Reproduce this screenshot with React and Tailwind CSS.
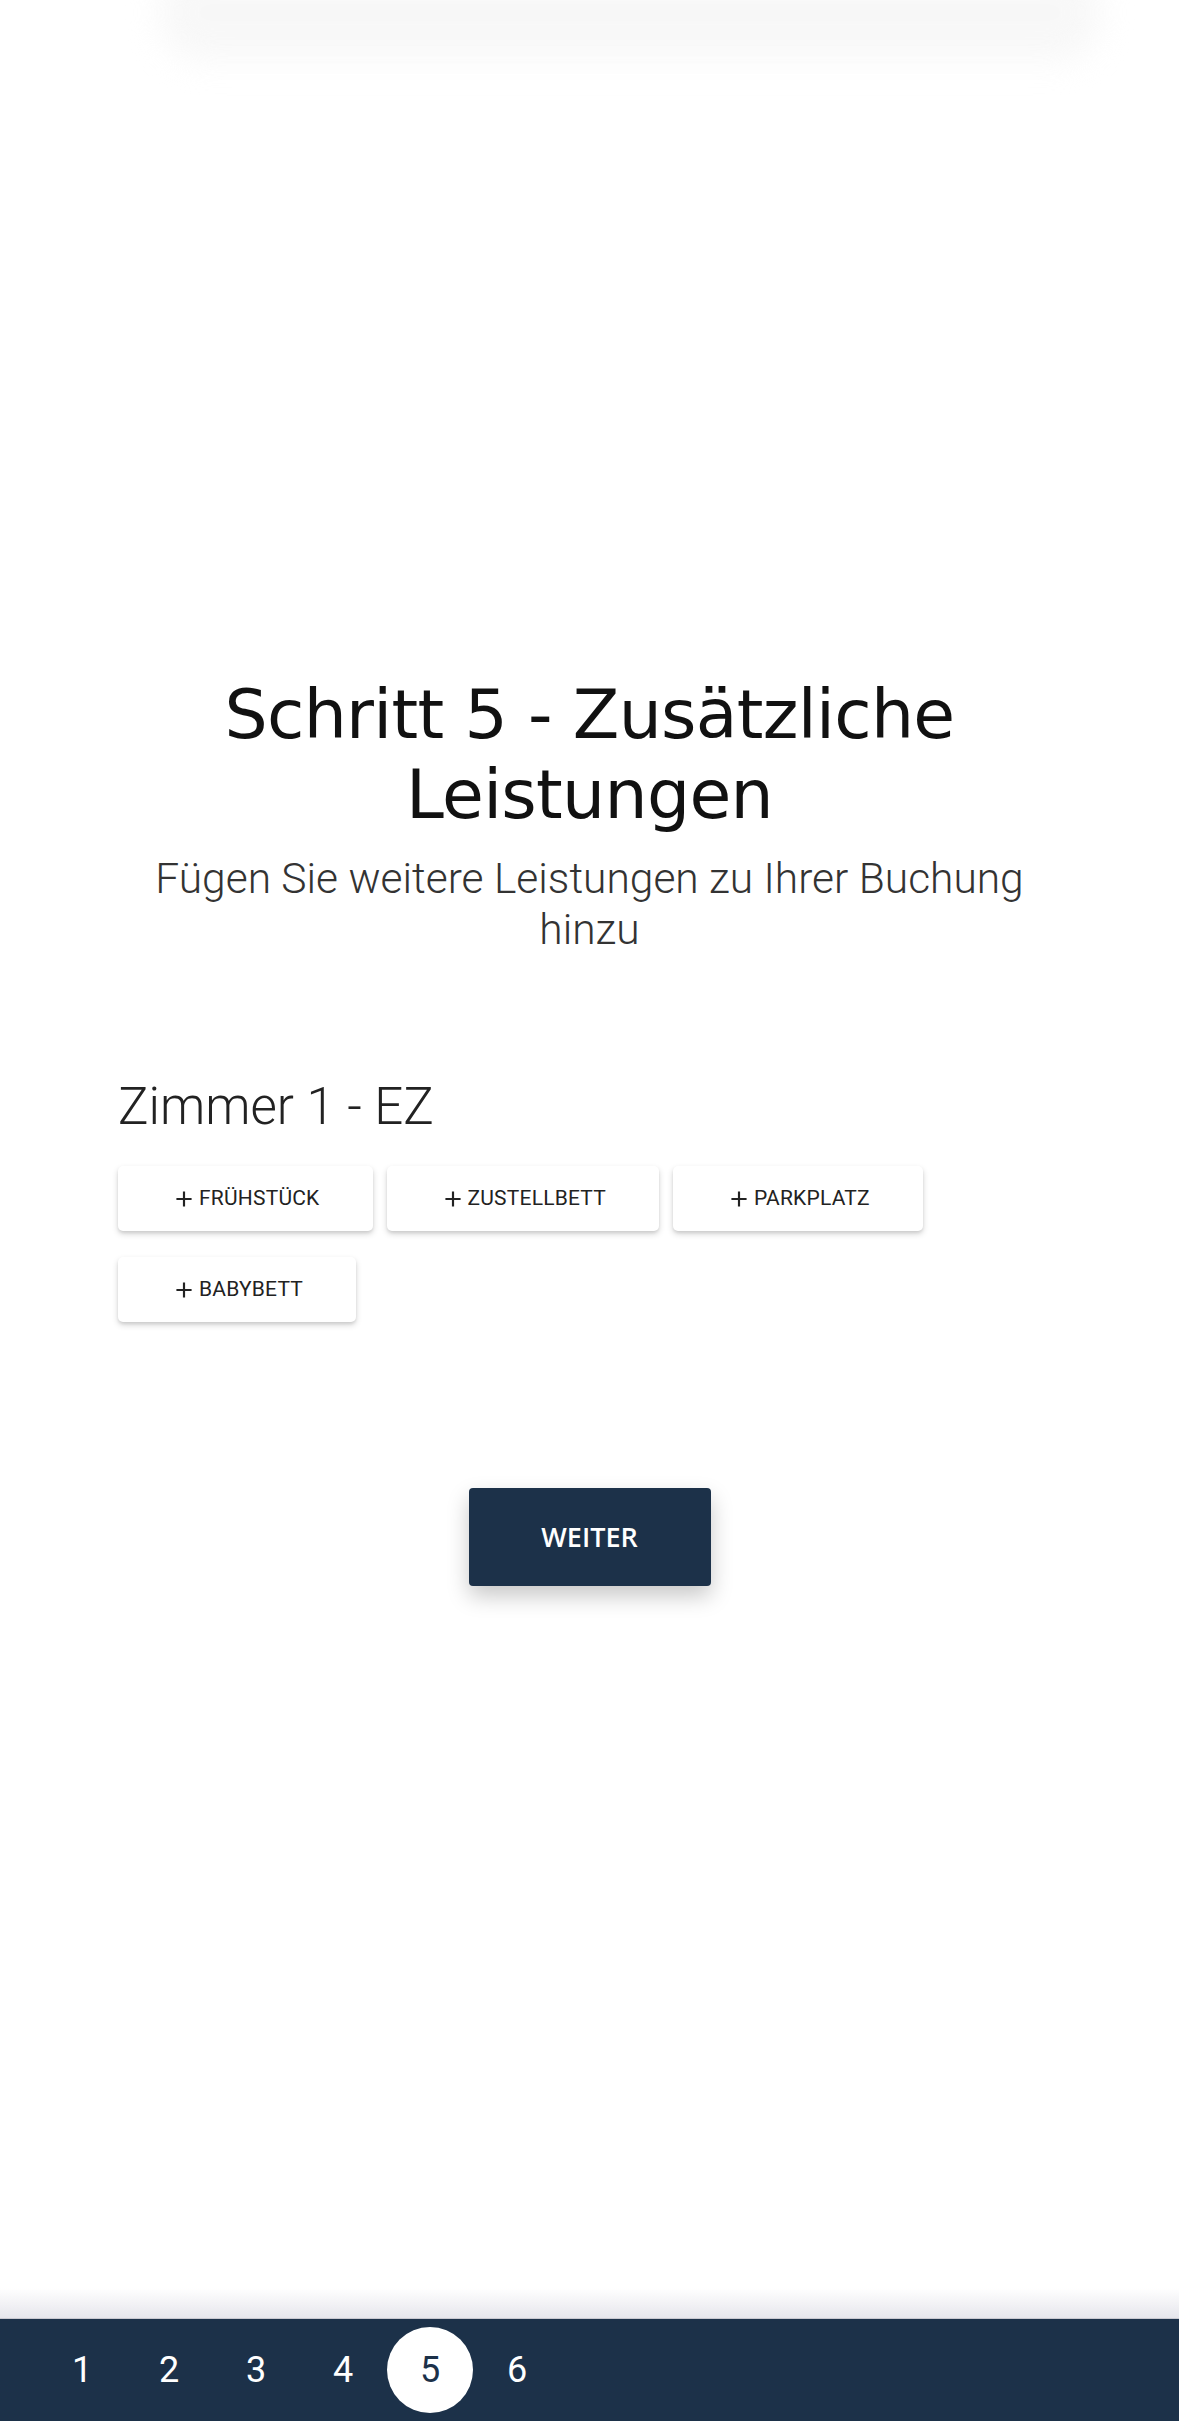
import React from 'react';

const extras = ['Frühstück', 'Zustellbett', 'Parkplatz', 'Babybett'];
const steps = [1, 2, 3, 4, 5, 6];

// MUI-style add glyph
const AddIcon = () => (
  <svg viewBox="0 0 24 24" className="w-[26px] h-[26px] shrink-0" fill="currentColor">
    <path d="M19 13h-6v6h-2v-6H5v-2h6V5h2v6h6v2z" />
  </svg>
);

const ExtraButton = ({ label }) => (
  <button className="h-[65px] px-[53px] flex items-center gap-[2px] bg-white rounded-[5px] shadow-[0_3px_6px_rgba(0,0,0,0.16),0_2px_3px_rgba(0,0,0,0.08)] text-[#222] font-['Roboto',sans-serif] text-[21px] font-normal uppercase tracking-[0.01em]">
    <AddIcon />
    <span>{label}</span>
  </button>
);

export default function App() {
  const current = 5;

  return (
    <div className="relative min-h-screen flex flex-col bg-white overflow-hidden">
      {/* faded header remnant */}
      <div className="absolute left-[160px] top-[-35px] w-[940px] h-[95px] bg-[#f5f5f5] blur-[16px] opacity-70 rounded-[40px]" />

      <main className="flex-1 flex flex-col items-center pt-[675px] px-[118px]">
        <h1 className="text-center text-[68px] leading-[80px] font-normal text-[#111] font-['DejaVu_Sans',sans-serif] tracking-[-0.01em]">
          Schritt 5 - Zusätzliche Leistungen
        </h1>
        <p className="mt-[18px] text-center text-[42.5px] leading-[51px] font-light text-[#333] font-['Roboto',sans-serif]">
          Fügen Sie weitere Leistungen zu Ihrer Buchung hinzu
        </p>

        <section className="w-full mt-[122px]">
          <h2 className="text-[51px] leading-[60px] font-light text-[#222] font-['Roboto',sans-serif]">
            Zimmer 1 - EZ
          </h2>
          <div className="mt-[29px] flex flex-wrap gap-x-[14px] gap-y-[26px] max-w-[820px]">
            {extras.map((e) => (
              <ExtraButton key={e} label={e} />
            ))}
          </div>
        </section>

        <button className="mt-[166px] w-[242px] h-[98px] rounded-[4px] bg-[#1c3149] text-white text-[27px] font-semibold font-['Open_Sans',sans-serif] uppercase shadow-[0_10px_22px_rgba(0,0,0,0.22)]">
          Weiter
        </button>
      </main>

      <div className="h-[30px] bg-gradient-to-b from-white to-[#e6e6ec]" />
      <nav className="h-[103px] bg-[#1c3149] border-t border-[#c8c8d0] flex items-center pl-[39px] gap-[1px]">
        {steps.map((s) => (
          <div
            key={s}
            className={
              s === current
                ? 'w-[86px] h-[86px] rounded-full bg-white text-[#1c3149] flex items-center justify-center text-[36px] font-["Roboto",sans-serif]'
                : 'w-[86px] h-[86px] rounded-full text-white flex items-center justify-center text-[36px] font-["Roboto",sans-serif]'
            }
          >
            {s}
          </div>
        ))}
      </nav>
    </div>
  );
}
